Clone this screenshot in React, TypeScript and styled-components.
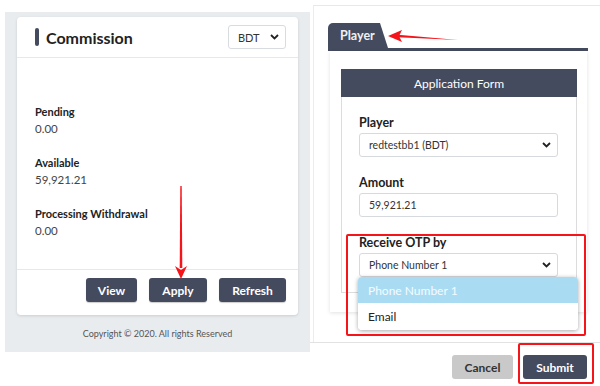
import React from 'react';
import styled, { createGlobalStyle } from 'styled-components';

const dark = '#444b5f';
const red = '#f5141a';

const GlobalStyle = createGlobalStyle`
  html, body {
    margin: 0;
    padding: 0;
    background: #fff;
    font-family: 'Lato', 'Noto Sans', sans-serif;
    color: #333;
  }
  * { box-sizing: border-box; }
`;

const Page = styled.div`
  position: relative;
  width: 600px;
  height: 386px;
  overflow: hidden;
  display: flex;
  align-items: flex-start;
`;

/* ---------- left: commission ---------- */

const LeftPanel = styled.div`
  margin: 12px 0 0 5px;
  width: 305px;
  height: 340px;
  background: #e9ecef;
  padding: 5px 12px 0 12px;
  display: flex;
  flex-direction: column;
`;

const Card = styled.div`
  background: #fff;
  border-radius: 4px;
  box-shadow: 0 1px 3px rgba(0, 0, 0, 0.12);
  height: 298px;
  display: flex;
  flex-direction: column;
`;

const CardHeader = styled.div`
  height: 41px;
  border-bottom: 1px solid #e6e8eb;
  display: flex;
  align-items: center;
  justify-content: space-between;
  padding: 0 12px 0 18px;
`;

const Title = styled.div`
  display: flex;
  align-items: center;
  gap: 7px;
  font-size: 16px;
  font-weight: 700;
  color: #222;
  &::before {
    content: '';
    width: 4px;
    height: 18px;
    border-radius: 2px;
    background: ${dark};
  }
`;

const SmallSelect = styled.div<{ $w: number }>`
  width: ${(p) => p.$w}px;
  height: 24px;
  border: 1px solid #d8dbe0;
  border-radius: 3px;
  display: flex;
  align-items: center;
  justify-content: space-between;
  padding: 0 6px 0 9px;
  font-size: 11px;
  color: #333;
  background: #fff;
`;

const CardBody = styled.div`
  flex: 1;
  padding: 45px 18px 0;
  display: flex;
  flex-direction: column;
`;

const Stat = styled.div`
  margin-bottom: 17px;
`;

const StatLabel = styled.div`
  font-size: 11px;
  font-weight: 700;
  line-height: 17px;
  color: #222;
`;

const StatValue = styled.div`
  font-size: 11.5px;
  line-height: 17px;
  color: #444;
`;

const CardFooter = styled.div`
  border-top: 1px solid #e6e8eb;
  padding: 8px 12px 0;
  height: 46px;
  display: flex;
  justify-content: flex-end;
  gap: 12px;
`;

const DarkButton = styled.button<{ $w: number }>`
  width: ${(p) => p.$w}px;
  height: 24px;
  border: none;
  border-radius: 3px;
  background: ${dark};
  color: #fff;
  font-family: inherit;
  font-weight: 700;
  font-size: 12px;
  padding: 0;
  box-shadow: 0 1px 1px rgba(0, 0, 0, 0.2);
`;

const Copyright = styled.div`
  flex: 1;
  display: flex;
  align-items: center;
  justify-content: center;
  font-size: 9px;
  color: #555;
`;

/* ---------- right: application ---------- */

const RightPanel = styled.div`
  margin: 5px 0 0 3px;
  flex: 1;
  display: flex;
  flex-direction: column;
`;

const ModalBody = styled.div`
  border-top: 1px solid #e8e8e8;
  border-left: 1px solid #ececec;
  height: 337px;
  padding: 17px 12px 0 14px;
`;

const TabBar = styled.div`
  display: flex;
  border-bottom: 3px solid ${dark};
`;

const Tab = styled.div`
  height: 25px;
  width: 60px;
  background: ${dark};
  color: #eef0f3;
  font-size: 12.5px;
  font-weight: 700;
  padding: 5px 0 0 12px;
  border-top-left-radius: 5px;
  clip-path: polygon(0 0, 52px 0, 60px 100%, 0 100%);
`;

const FormCard = styled.div`
  margin: 0 1px 0 2px;
  height: 261px;
  padding: 18px 10px 0 11px;
  box-shadow: 0 1px 4px rgba(0, 0, 0, 0.12);
`;

const FormBox = styled.div`
  border: 1px solid #dcdcdc;
  border-top: none;
  height: 224px;
`;

const FormHeader = styled.div`
  height: 28px;
  margin: 0 -1px;
  background: ${dark};
  color: #fff;
  font-size: 12px;
  display: flex;
  align-items: center;
  justify-content: center;
`;

const FormBody = styled.div`
  padding: 19px 18px 0 17px;
  display: flex;
  flex-direction: column;
  gap: 19px;
`;

const Field = styled.div`
  display: flex;
  flex-direction: column;
  gap: 3px;
`;

const FieldLabel = styled.div`
  font-size: 12.5px;
  font-weight: 700;
  line-height: 14px;
  color: #222;
`;

const Control = styled.div`
  height: 24px;
  border: 1px solid #d6d9de;
  border-radius: 3px;
  display: flex;
  align-items: center;
  justify-content: space-between;
  padding: 0 6px 0 9px;
  font-size: 10.5px;
  color: #333;
`;

const ModalFooter = styled.div`
  border-top: 1px solid #e2e2e2;
  margin-left: -3px;
  padding: 12px 13px 0;
  display: flex;
  justify-content: flex-end;
  gap: 10px;
`;

const FooterButton = styled.button<{ $primary?: boolean; $w: number }>`
  width: ${(p) => p.$w}px;
  height: 24px;
  border: none;
  border-radius: 3px;
  background: ${(p) => (p.$primary ? dark : '#c9c9c9')};
  color: ${(p) => (p.$primary ? '#fff' : '#333')};
  font-family: inherit;
  font-weight: 700;
  font-size: 12px;
  padding: 0;
`;

/* ---------- overlays ---------- */

const Dropdown = styled.div`
  position: absolute;
  left: 358px;
  top: 277px;
  width: 220px;
  border-radius: 4px;
  background: #fff;
  box-shadow: 0 1px 4px rgba(0, 0, 0, 0.35);
  overflow: hidden;
`;

const Option = styled.div<{ $active?: boolean }>`
  height: ${(p) => (p.$active ? 26 : 27)}px;
  display: flex;
  align-items: center;
  padding-left: 10px;
  font-size: 12px;
  background: ${(p) => (p.$active ? '#a9dcf3' : '#fff')};
  color: ${(p) => (p.$active ? '#f4fbff' : '#222')};
`;

const Highlight = styled.div<{ $x: number; $y: number; $w: number; $h: number }>`
  position: absolute;
  left: ${(p) => p.$x}px;
  top: ${(p) => p.$y}px;
  width: ${(p) => p.$w}px;
  height: ${(p) => p.$h}px;
  border: 2px solid ${red};
  border-radius: 2px;
  pointer-events: none;
`;

const Overlay = styled.svg`
  position: absolute;
  left: 0;
  top: 0;
  pointer-events: none;
`;

const Chevron = () => (
  <svg width="9" height="6" viewBox="0 0 9 6">
    <path d="M1 1 L4.5 4.5 L8 1" stroke="#222" strokeWidth="1.8" fill="none" />
  </svg>
);

export default function App() {
  return (
    <Page>
      <GlobalStyle />
      <LeftPanel>
        <Card>
          <CardHeader>
            <Title>Commission</Title>
            <SmallSelect $w={58}>
              BDT <Chevron />
            </SmallSelect>
          </CardHeader>
          <CardBody>
            <Stat>
              <StatLabel>Pending</StatLabel>
              <StatValue>0.00</StatValue>
            </Stat>
            <Stat>
              <StatLabel>Available</StatLabel>
              <StatValue>59,921.21</StatValue>
            </Stat>
            <Stat>
              <StatLabel>Processing Withdrawal</StatLabel>
              <StatValue>0.00</StatValue>
            </Stat>
          </CardBody>
          <CardFooter>
            <DarkButton $w={51}>View</DarkButton>
            <DarkButton $w={58}>Apply</DarkButton>
            <DarkButton $w={67}>Refresh</DarkButton>
          </CardFooter>
        </Card>
        <Copyright>Copyright © 2020. All rights Reserved</Copyright>
      </LeftPanel>

      <RightPanel>
        <ModalBody>
          <TabBar>
            <Tab>Player</Tab>
          </TabBar>
          <FormCard>
            <FormBox>
              <FormHeader>Application Form</FormHeader>
              <FormBody>
                <Field>
                  <FieldLabel>Player</FieldLabel>
                  <Control>
                    redtestbb1 (BDT) <Chevron />
                  </Control>
                </Field>
                <Field>
                  <FieldLabel>Amount</FieldLabel>
                  <Control>59,921.21</Control>
                </Field>
                <Field>
                  <FieldLabel>Receive OTP by</FieldLabel>
                  <Control>
                    Phone Number 1 <Chevron />
                  </Control>
                </Field>
              </FormBody>
            </FormBox>
          </FormCard>
        </ModalBody>
        <ModalFooter>
          <FooterButton $w={61}>Cancel</FooterButton>
          <FooterButton $w={64} $primary>
            Submit
          </FooterButton>
        </ModalFooter>
      </RightPanel>

      <Dropdown>
        <Option $active>Phone Number 1</Option>
        <Option>Email</Option>
      </Dropdown>

      <Highlight $x={346} $y={234} $w={240} $h={102} />
      <Highlight $x={518} $y={343} $w={76} $h={41} />

      <Overlay width="600" height="386" viewBox="0 0 600 386">
        {/* arrow to the Player tab */}
        <polygon points="458,40 398,34.8 398,37.2" fill={red} />
        <polygon points="388,36 402,30 399,36 402,42" fill={red} />
        {/* arrow down to Apply */}
        <polygon points="180.3,186 181.7,186 182.3,268 179.7,268" fill={red} />
        <polygon points="181,279 175,266 181,270 187,266" fill={red} />
      </Overlay>
    </Page>
  );
}
